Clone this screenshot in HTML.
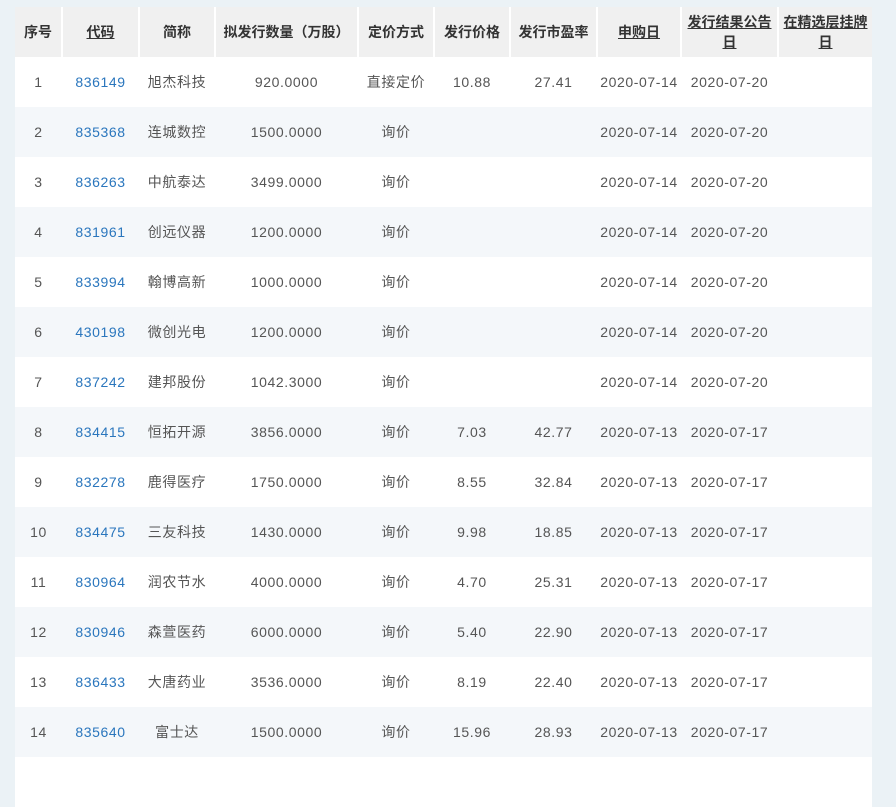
<!DOCTYPE html>
<html><head><meta charset="utf-8"><style>
html,body{margin:0;padding:0;background:#ebf2f6;width:896px;height:766px;overflow:hidden}
table{position:absolute;left:15px;top:7px;border-collapse:collapse;table-layout:fixed;width:857px;font-family:"Liberation Sans","Noto Sans CJK SC",sans-serif;font-size:14px;color:#555}
th{background:#f0f0f0;color:#333;font-weight:bold;height:50px;padding:0;border-left:2px solid #fff;line-height:20px;text-align:center}
th:first-child{border-left:none}
th u{text-decoration:underline}
td{height:50px;padding:0;text-align:center;white-space:nowrap;letter-spacing:0.6px}
tr:nth-child(odd) td{background:#fff}
tr:nth-child(even) td{background:#f4f7fa}
td a{color:#2a76bd;text-decoration:none}
</style></head><body>
<table>
<colgroup><col style="width:47px"><col style="width:77px"><col style="width:76px"><col style="width:143px"><col style="width:76px"><col style="width:76px"><col style="width:87px"><col style="width:84px"><col style="width:97px"><col style="width:94px"></colgroup>
<thead><tr><th>序号</th><th><u>代码</u></th><th>简称</th><th>拟发行数量（万股）</th><th>定价方式</th><th>发行价格</th><th>发行市盈率</th><th><u>申购日</u></th><th><u>发行结果公告日</u></th><th><u>在精选层挂牌日</u></th></tr></thead>
<tbody>
<tr><td>1</td><td><a>836149</a></td><td>旭杰科技</td><td>920.0000</td><td>直接定价</td><td>10.88</td><td>27.41</td><td>2020-07-14</td><td>2020-07-20</td><td></td></tr>
<tr><td>2</td><td><a>835368</a></td><td>连城数控</td><td>1500.0000</td><td>询价</td><td></td><td></td><td>2020-07-14</td><td>2020-07-20</td><td></td></tr>
<tr><td>3</td><td><a>836263</a></td><td>中航泰达</td><td>3499.0000</td><td>询价</td><td></td><td></td><td>2020-07-14</td><td>2020-07-20</td><td></td></tr>
<tr><td>4</td><td><a>831961</a></td><td>创远仪器</td><td>1200.0000</td><td>询价</td><td></td><td></td><td>2020-07-14</td><td>2020-07-20</td><td></td></tr>
<tr><td>5</td><td><a>833994</a></td><td>翰博高新</td><td>1000.0000</td><td>询价</td><td></td><td></td><td>2020-07-14</td><td>2020-07-20</td><td></td></tr>
<tr><td>6</td><td><a>430198</a></td><td>微创光电</td><td>1200.0000</td><td>询价</td><td></td><td></td><td>2020-07-14</td><td>2020-07-20</td><td></td></tr>
<tr><td>7</td><td><a>837242</a></td><td>建邦股份</td><td>1042.3000</td><td>询价</td><td></td><td></td><td>2020-07-14</td><td>2020-07-20</td><td></td></tr>
<tr><td>8</td><td><a>834415</a></td><td>恒拓开源</td><td>3856.0000</td><td>询价</td><td>7.03</td><td>42.77</td><td>2020-07-13</td><td>2020-07-17</td><td></td></tr>
<tr><td>9</td><td><a>832278</a></td><td>鹿得医疗</td><td>1750.0000</td><td>询价</td><td>8.55</td><td>32.84</td><td>2020-07-13</td><td>2020-07-17</td><td></td></tr>
<tr><td>10</td><td><a>834475</a></td><td>三友科技</td><td>1430.0000</td><td>询价</td><td>9.98</td><td>18.85</td><td>2020-07-13</td><td>2020-07-17</td><td></td></tr>
<tr><td>11</td><td><a>830964</a></td><td>润农节水</td><td>4000.0000</td><td>询价</td><td>4.70</td><td>25.31</td><td>2020-07-13</td><td>2020-07-17</td><td></td></tr>
<tr><td>12</td><td><a>830946</a></td><td>森萱医药</td><td>6000.0000</td><td>询价</td><td>5.40</td><td>22.90</td><td>2020-07-13</td><td>2020-07-17</td><td></td></tr>
<tr><td>13</td><td><a>836433</a></td><td>大唐药业</td><td>3536.0000</td><td>询价</td><td>8.19</td><td>22.40</td><td>2020-07-13</td><td>2020-07-17</td><td></td></tr>
<tr><td>14</td><td><a>835640</a></td><td>富士达</td><td>1500.0000</td><td>询价</td><td>15.96</td><td>28.93</td><td>2020-07-13</td><td>2020-07-17</td><td></td></tr>
<tr><td>&nbsp;</td><td></td><td></td><td></td><td></td><td></td><td></td><td></td><td></td><td></td></tr>
</tbody></table>
</body></html>
